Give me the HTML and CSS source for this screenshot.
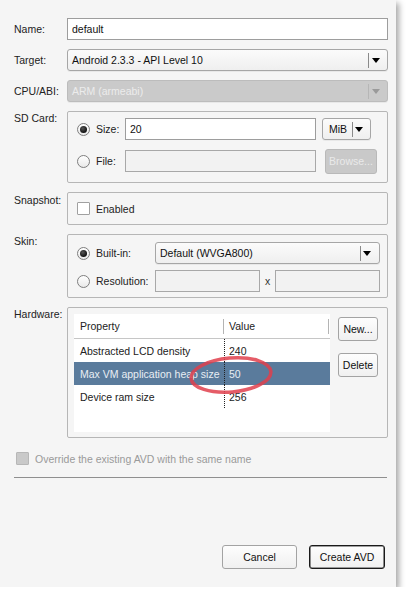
FILE: index.html
```html
<!DOCTYPE html>
<html>
<head>
<meta charset="utf-8">
<title>Create new Android Virtual Device (AVD)</title>
<link rel="stylesheet" href="styles.css">
</head>
<body>
<div class="window">
  <div class="row">
    <div class="lbl">Name:</div>
    <div class="input grow">default</div>
  </div>
  <div class="row">
    <div class="lbl">Target:</div>
    <div class="select grow">
      <span class="sel-text">Android 2.3.3 - API Level 10</span>
      <span class="sel-div"></span>
      <span class="sel-arrow"><span class="tri"></span></span>
    </div>
  </div>
  <div class="row">
    <div class="lbl">CPU/ABI:</div>
    <div class="select grow disabled">
      <span class="sel-text">ARM (armeabi)</span>
      <span class="sel-div"></span>
      <span class="sel-arrow"><span class="tri"></span></span>
    </div>
  </div>

  <div class="row top">
    <div class="lbl glbl">SD Card:</div>
    <div class="group sd">
      <div class="opt">
        <span class="radio on"></span>
        <span class="opt-lbl sd-lbl">Size:</span>
        <div class="input sd-input">20</div>
        <div class="select mib">
          <span class="sel-text">MiB</span>
          <span class="sel-div"></span>
          <span class="sel-arrow"><span class="tri"></span></span>
        </div>
      </div>
      <div class="opt">
        <span class="radio"></span>
        <span class="opt-lbl sd-lbl">File:</span>
        <div class="input sd-input off"></div>
        <div class="btn disabled browse">Browse...</div>
      </div>
    </div>
  </div>

  <div class="row top">
    <div class="lbl glbl snap-lbl">Snapshot:</div>
    <div class="group snap">
      <span class="check"></span>
      <span class="check-lbl">Enabled</span>
    </div>
  </div>

  <div class="row top">
    <div class="lbl glbl">Skin:</div>
    <div class="group skin">
      <div class="opt">
        <span class="radio on"></span>
        <span class="opt-lbl skin-lbl">Built-in:</span>
        <div class="select skin-sel">
          <span class="sel-text">Default (WVGA800)</span>
          <span class="sel-div"></span>
          <span class="sel-arrow"><span class="tri"></span></span>
        </div>
      </div>
      <div class="opt">
        <span class="radio"></span>
        <span class="opt-lbl skin-lbl">Resolution:</span>
        <div class="input off res"></div>
        <span class="res-x">x</span>
        <div class="input off res"></div>
      </div>
    </div>
  </div>

  <div class="row top">
    <div class="lbl glbl">Hardware:</div>
    <div class="group hw">
      <div class="table">
        <div class="thead">
          <span class="th th-prop">Property</span>
          <span class="hdiv"></span>
          <span class="th th-val">Value</span>
          <span class="hdiv"></span>
        </div>
        <div class="tr">
          <span class="td td-prop">Abstracted LCD density</span>
          <span class="td td-val">240</span>
        </div>
        <div class="tr sel">
          <span class="td td-prop">Max VM application heap size</span>
          <span class="td td-val">50</span>
        </div>
        <div class="tr">
          <span class="td td-prop">Device ram size</span>
          <span class="td td-val">256</span>
        </div>
        <svg class="mark" width="100" height="50" viewBox="0 0 100 50">
          <ellipse cx="50" cy="25" rx="40" ry="17" transform="rotate(-5 50 25)" fill="none" stroke="rgba(224,64,76,0.85)" stroke-width="3.5"/>
        </svg>
      </div>
      <div class="hw-btns">
        <div class="btn small">New...</div>
        <div class="btn small">Delete</div>
      </div>
    </div>
  </div>

  <div class="override">
    <span class="check disabled"></span>
    <span class="override-lbl">Override the existing AVD with the same name</span>
  </div>
  <div class="sep"></div>

  <div class="actions">
    <div class="btn act">Cancel</div>
    <div class="btn act default">Create AVD</div>
  </div>
</div>
</body>
</html>
```
FILE: styles.css
```css
* { box-sizing: border-box; }
html, body { margin: 0; padding: 0; background: #fff; }
body {
  font-family: "Liberation Sans", Arial, sans-serif;
  font-size: 10.5px;
  color: #222;
}
.window {
  width: 396px;
  height: 587px;
  background: #f5f5f5;
  box-shadow: 3px 3px 6px rgba(0,0,0,0.35);
  padding: 18px 8px 18px 14px;
  display: flex;
  flex-direction: column;
}
.row { display: flex; align-items: center; margin-bottom: 9px; }
.row.top { align-items: flex-start; }
.lbl { width: 53px; flex: none; line-height: 13px; }
.glbl { padding-top: 1px; }
.snap-lbl { padding-top: 2px; }
.grow { flex: 1; }

.input {
  height: 22px;
  border: 1px solid #9d9d9d;
  background: #fff;
  padding: 0 4px;
  display: flex;
  align-items: center;
  color: #111;
}
.input.off { background: #f2f2f2; border-color: #a8a8a8; }

.select {
  height: 22px;
  border: 1px solid #a6a6a6;
  border-radius: 3px;
  background: linear-gradient(#fbfbfb, #efefef);
  display: flex;
  align-items: center;
  color: #111;
  box-shadow: 0 1px 0 rgba(0,0,0,0.05);
}
.sel-text { flex: 1; padding-left: 4px; white-space: nowrap; overflow: hidden; }
.sel-div { width: 1px; height: 15px; background: #8a8a8a; flex: none; }
.sel-arrow { width: 18px; flex: none; display: flex; align-items: center; padding-left: 3px; }
.tri {
  width: 0; height: 0;
  border-left: 4px solid transparent;
  border-right: 4px solid transparent;
  border-top: 5px solid #000;
}
.select.disabled { background: #cacaca; border-color: #bcbcbc; color: #ececec; }
.select.disabled .sel-div { background: #b6b6b6; }
.select.disabled .tri { border-top-color: #9a9a9a; }

.group {
  flex: 1;
  border: 1px solid #b6b6b6;
  border-radius: 2px;
}
.opt { display: flex; align-items: center; height: 22px; }
.radio {
  width: 13px; height: 13px; flex: none;
  border: 1px solid #7e7e7e;
  border-radius: 50%;
  background: linear-gradient(#ffffff, #e9e9e9);
  margin-right: 6px;
  display: flex; align-items: center; justify-content: center;
}
.radio.on::after {
  content: "";
  width: 7px; height: 7px; border-radius: 50%;
  background: radial-gradient(circle at 40% 35%, #555, #111 70%);
}
.opt-lbl { flex: none; }

.sd { height: 72px; padding: 6px 0 0 9px; }
.sd .opt + .opt { margin-top: 10px; }
.sd-lbl { width: 29px; }
.sd-input { width: 191px; }
.mib { width: 49px; margin-left: 6px; }
.mib .sel-text { padding-left: 6px; }
.mib .sel-arrow { width: 17px; padding-left: 2px; }

.btn {
  display: flex; align-items: center; justify-content: center;
  border: 1px solid #a3a3a3;
  border-radius: 3px;
  background: linear-gradient(#fdfdfd, #f0f0f0);
  color: #111;
  white-space: nowrap;
}
.btn.disabled { background: #c9c9c9; border-color: #b9b9b9; color: #e9e9e9; }
.browse { width: 52px; height: 25px; margin-left: 9px; }

.snap { height: 33px; padding-left: 9px; display: flex; align-items: center; }
.check {
  width: 13px; height: 13px; flex: none;
  border: 1px solid #a0a0a0;
  background: #fff;
  border-radius: 1px;
}
.check.disabled { background: #c9c9c9; border-color: #b7b7b7; }
.check-lbl { margin-left: 6px; }

.skin { height: 64px; padding: 7px 0 0 9px; }
.skin .opt + .opt { margin-top: 6px; }
.skin-lbl { width: 59px; }
.skin-sel { width: 225px; }
.skin-sel .sel-arrow { padding-left: 2px; }
.res { width: 105px; }
.res-x { width: 15px; text-align: center; color: #333; }

.hw { height: 131px; padding: 6px 9px 0 6px; display: flex; }
.table {
  position: relative;
  width: 256px; height: 118px;
  background: #fff;
}
.thead { display: flex; align-items: center; height: 25px; border-bottom: 1px solid #c6c6c6; }
.th { padding-left: 6px; }
.th-prop { width: 149px; }
.th-val { flex: 1; padding-left: 5px; }
.hdiv { width: 1px; height: 15px; background: #b4b4b4; flex: none; }
.thead .hdiv:last-child { margin-right: 1px; }
.tr { display: flex; height: 23px; align-items: stretch; }
.td { display: flex; align-items: center; white-space: nowrap; }
.td-prop { width: 150px; padding-left: 6px; overflow: hidden; }
.td-val { flex: 1; padding-left: 4px; border-left: 1px dotted #222; }
.tr.sel { background: #5a7b9c; color: #e8eef4; }
.mark { position: absolute; left: 107px; top: 36px; }

.hw-btns { display: flex; flex-direction: column; margin-left: 8px; padding-top: 3px; }
.btn.small { width: 40px; height: 24px; }
.btn.small + .btn.small { margin-top: 12px; }

.override { display: flex; align-items: center; margin-top: 5px; padding-left: 2px; height: 13px; }
.override-lbl { margin-left: 6px; color: #9a9a9a; }
.sep { height: 1px; background: #8f8f8f; margin-top: 12px; margin-right: 1px; }

.actions { margin-top: auto; display: flex; justify-content: flex-end; padding-right: 3px; }
.btn.act { width: 75px; height: 24px; }
.btn.act + .btn.act { margin-left: 12px; }
.btn.default { width: 76px; border: 1px solid #1a1a1a; box-shadow: inset 0 0 0 0.6px #444; }
```
